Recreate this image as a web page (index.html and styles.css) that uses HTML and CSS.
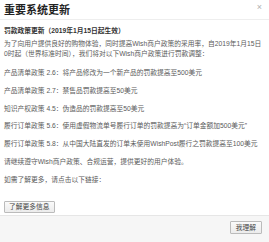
FILE: index.html
```html
<!DOCTYPE html>
<html lang="zh-CN">
<head>
<meta charset="utf-8">
<title>重要系统更新</title>
<link rel="stylesheet" href="styles.css">
</head>
<body>
<div class="dialog">
  <div class="header">
    <h1 class="title">重要系统更新</h1>
    <span class="close">×</span>
  </div>
  <div class="content">
    <p class="subtitle">罚款政策更新（2019年1月15日起生效）</p>
    <p class="intro">为了向用户提供良好的购物体验，同时提高Wish商户政策的采用率，自2019年1月15日<br>0时起（世界标准时间），我们将对以下Wish商户政策进行罚款调整：</p>
    <p>产品清单政策 2.6：将产品修改为一个新产品的罚款提高至500美元</p>
    <p>产品清单政策 2.7：禁售品罚款提高至50美元</p>
    <p>知识产权政策 4.5：伪造品的罚款提高至50美元</p>
    <p>履行订单政策 5.6：使用虚假物流单号履行订单的罚款提高为“订单金额加500美元”</p>
    <p>履行订单政策 5.8：从中国大陆直发的订单未使用WishPost履行之罚款提高至100美元</p>
    <p>请继续遵守Wish商户政策、合规运营，提供更好的用户体验。</p>
    <p>如需了解更多，请点击以下链接：</p>
    <button class="btn more">了解更多信息</button>
  </div>
  <div class="footer">
    <button class="btn ok">我理解</button>
  </div>
</div>
</body>
</html>
```

FILE: styles.css
```css
html, body {
  margin: 0;
  padding: 0;
  background: #fff;
}
body {
  width: 269px;
  height: 242px;
  overflow: hidden;
  font-family: "Liberation Sans", "Noto Sans CJK SC", sans-serif;
}
.dialog {
  display: flex;
  flex-direction: column;
  height: 242px;
}
.header {
  height: 20px;
  box-sizing: border-box;
  border-bottom: 1px solid #eeeeee;
  display: flex;
  align-items: center;
  justify-content: space-between;
  padding: 0 7px 0 4px;
}
.title {
  margin: 0;
  font-size: 11px;
  font-weight: bold;
  color: #222;
  line-height: 20px;
}
.close {
  font-size: 9px;
  color: #b0b0b0;
  line-height: 10px;
  margin-top: -5px;
}
.content {
  flex: 1;
  padding: 6px 4px 0;
}
.content p {
  margin: 0 0 7.8px;
  font-size: 6.75px;
  line-height: 10px;
  color: #5a5a5a;
  white-space: nowrap;
}
.content p.subtitle {
  font-weight: bold;
  color: #333;
  margin-bottom: 3px;
}
.content p.intro {
  margin-bottom: 9px;
}
.btn {
  font-family: inherit;
  font-size: 6.75px;
  color: #444;
  background: linear-gradient(#fafafa, #ececec);
  border: 1px solid #bbb;
  border-radius: 1px;
  padding: 0 4px;
  height: 12px;
  line-height: 10px;
  cursor: pointer;
}
.more {
  margin-top: 8px;
}
.footer {
  height: 27px;
  box-sizing: border-box;
  border-top: 1px solid #e6e6e6;
  background: #f6f6f6;
  display: flex;
  align-items: center;
  justify-content: flex-end;
  padding: 0 7px 3px;
}
.ok {
  height: 13px;
  padding: 0 5px;
}
```
